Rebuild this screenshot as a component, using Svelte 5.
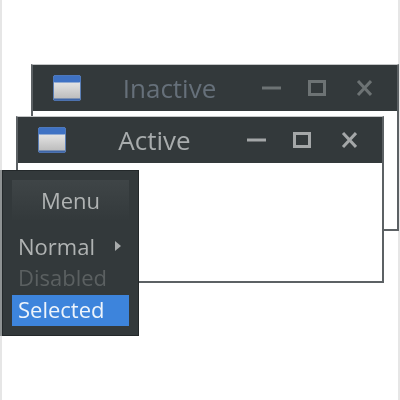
<script>
  const windows = [
    { cls: 'inactive', title: 'Inactive' },
    { cls: 'active', title: 'Active' }
  ];
</script>

<div class="stage">
  {#each windows as w}
    <section class="window {w.cls}">
      <header class="titlebar">
        <svg class="appicon" viewBox="0 0 28 26" width="28" height="26">
          <defs>
            <linearGradient id="body-{w.cls}" x1="0" y1="0" x2="0" y2="1">
              <stop offset="0" stop-color="#f4f4f4" />
              <stop offset="1" stop-color="#b8b8b8" />
            </linearGradient>
          </defs>
          <rect x="0.5" y="0.5" width="27" height="25" rx="1.5" fill="url(#body-{w.cls})" stroke="#5c7fb5" />
          <rect x="0.5" y="0.5" width="27" height="7" rx="1.5" fill="#3f72c4" />
          <rect x="1" y="23.5" width="26" height="2" fill="#3f66a8" />
        </svg>
        <span class="title">{w.title}</span>
        <svg class="controls" viewBox="0 0 110 20" width="110" height="20" fill="none" stroke-width="3">
          <path d="M0 10H19" />
          <rect x="47.5" y="3.5" width="15" height="13" />
          <path d="M96 3L109 17M109 3L96 17" />
        </svg>
      </header>
    </section>
  {/each}

  <nav class="menu">
    <div class="menu-button">Menu</div>
    <ul>
      <li class="item">Normal<span class="arrow"></span></li>
      <li class="item disabled">Disabled</li>
      <li class="item selected">Selected</li>
    </ul>
  </nav>
</div>

<style>
  :global(body) {
    margin: 0;
    background: #fff;
  }
  .stage {
    position: relative;
    width: 400px;
    height: 400px;
    box-sizing: border-box;
    background: #fff;
    border-left: 2px solid #e6e6e6;
    border-right: 2px solid #e6e6e6;
    font-family: "Open Sans", "Noto Sans", sans-serif;
    filter: blur(0.75px);
  }
  .window {
    position: absolute;
    box-sizing: border-box;
    background: #fff;
    border: 2px solid #5c6164;
    border-top: 1px solid #c4c6c7;
  }
  .inactive {
    left: 29px;
    top: 64px;
    width: 368px;
    height: 167px;
    color: #66707a;
  }
  .inactive .controls {
    stroke: #6d7374;
  }
  .active {
    left: 14px;
    top: 116px;
    width: 368px;
    height: 167px;
    color: #a8acad;
  }
  .active .controls {
    stroke: #a4a7a8;
  }
  .titlebar {
    display: flex;
    align-items: center;
    height: 46px;
    background: #33393b;
    padding: 0 25px 0 20px;
  }
  .appicon {
    flex: none;
  }
  .title {
    flex: 1;
    text-align: center;
    font-size: 26px;
    line-height: 1;
    padding-right: 4px;
  }
  .controls {
    flex: none;
  }
  .menu {
    position: absolute;
    left: 0;
    top: 170px;
    width: 137px;
    height: 166px;
    box-sizing: border-box;
    background: #33393b;
    border: 1px solid #23282a;
    box-shadow: -2px 0 0 #8f9394;
    padding: 9px 9px;
    color: #b0b3b3;
  }
  .menu-button {
    height: 41px;
    line-height: 41px;
    text-align: center;
    font-size: 22px;
    background: linear-gradient(#3f4547, #33393b);
  }
  ul {
    list-style: none;
    margin: 10px 0 0;
    padding: 0;
  }
  .item {
    position: relative;
    height: 31px;
    line-height: 31px;
    padding-left: 6px;
    font-size: 22px;
  }
  .disabled {
    color: #5b6061;
  }
  .selected {
    margin-top: 2px;
    line-height: 29px;
    background: #3d84dc;
    color: #eef4fb;
  }
  .arrow {
    position: absolute;
    left: 103px;
    top: 10px;
    border-left: 6px solid #a8abab;
    border-top: 5px solid transparent;
    border-bottom: 5px solid transparent;
  }
</style>
